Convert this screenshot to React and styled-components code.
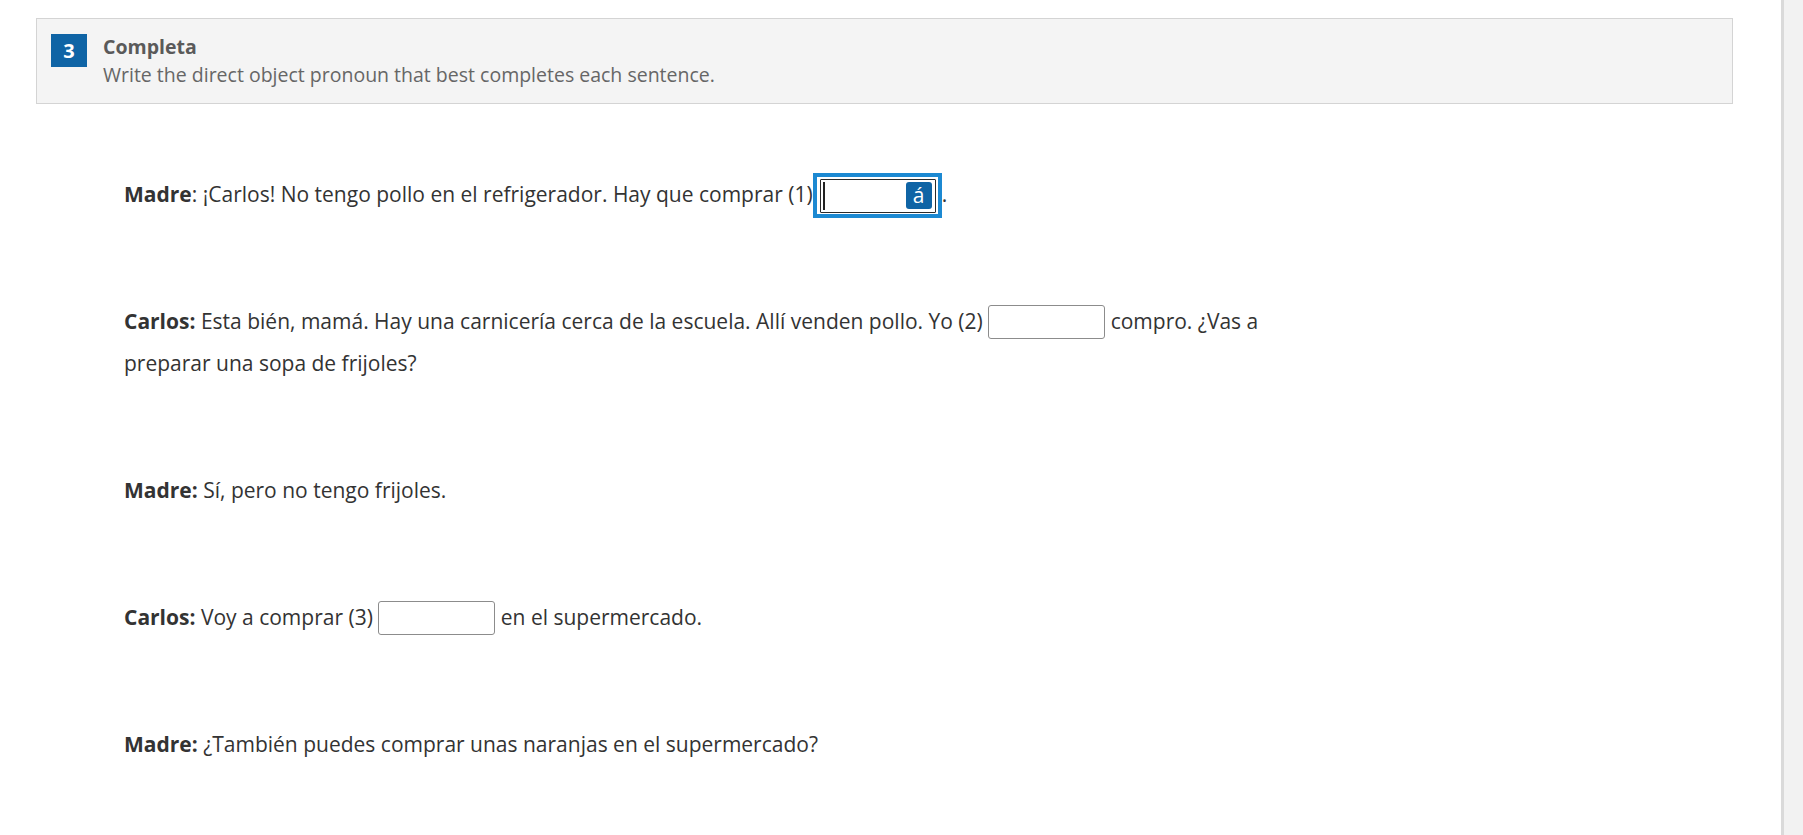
import styled, { createGlobalStyle } from "styled-components";

const GlobalStyle = createGlobalStyle`
    html, body {
        margin: 0;
        padding: 0;
        background: #fff;
    }
    body {
        font-family: "Open Sans", "Liberation Sans", sans-serif;
        color: #333;
        overflow: hidden;
    }
`;

const dialogue = [
    { who: "Madre", colonBold: false, parts: ["¡Carlos! No tengo pollo en el refrigerador. Hay que comprar (1)", { blank: 1, focused: true }, "."] },
    { who: "Carlos", colonBold: true, parts: ["Esta bién, mamá. Hay una carnicería cerca de la escuela. Allí venden pollo. Yo (2) ", { blank: 2 }, " compro. ¿Vas a preparar una sopa de frijoles?"] },
    { who: "Madre", colonBold: true, parts: ["Sí, pero no tengo frijoles."] },
    { who: "Carlos", colonBold: true, parts: ["Voy a comprar (3) ", { blank: 3 }, " en el supermercado."] },
    { who: "Madre", colonBold: true, parts: ["¿También puedes comprar unas naranjas en el supermercado?"] },
];

const Blank = ({ focused }) => {
    if (!focused) return <BlankInput type="text" />;
    return (
        <FocusRing>
            <BlankInput type="text" $focused />
            <Caret />
            <AccentButton type="button">á</AccentButton>
        </FocusRing>
    );
};

const App = () => {
    return (
        <Page>
            <GlobalStyle />
            <Main>
                <Instructions>
                    <Badge>3</Badge>
                    <InstructionsText>
                        <Title>Completa</Title>
                        <Subtitle>Write the direct object pronoun that best completes each sentence.</Subtitle>
                    </InstructionsText>
                </Instructions>

                <Dialogue>
                    {dialogue.map((line, i) => (
                        <Line key={i}>
                            <Speaker>{line.who}{line.colonBold && ":"}</Speaker>
                            {!line.colonBold && ":"}{" "}
                            {line.parts.map((part, j) =>
                                typeof part === "string"
                                    ? part
                                    : <Blank key={j} focused={part.focused} />
                            )}
                        </Line>
                    ))}
                </Dialogue>
            </Main>
            <ScrollTrack />
        </Page>
    );
};

export default App;

const Page = styled.div`
    display: flex;
    height: 100vh;
    width: 100%;
`;

const Main = styled.main`
    flex: 1;
    padding: 18px 48px 0 36px;
    min-width: 0;
`;

const Instructions = styled.section`
    display: flex;
    align-items: flex-start;
    gap: 16px;
    padding: 15px 14px 14px 14px;
    background-color: #f4f4f4;
    border: 1px solid #d4d4d4;
`;

const Badge = styled.div`
    width: 36px;
    height: 33px;
    display: flex;
    align-items: center;
    justify-content: center;
    background-color: #0f64a5;
    color: #fff;
    font-size: 20px;
    font-weight: 700;
`;

const InstructionsText = styled.div`
    display: flex;
    flex-direction: column;
    font-size: 19.5px;
    line-height: 28px;
`;

const Title = styled.div`
    font-weight: 700;
    color: #5a5a5a;
    margin-top: -1px;
`;

const Subtitle = styled.div`
    color: #666;
`;

const Dialogue = styled.div`
    display: flex;
    flex-direction: column;
    gap: 85px;
    margin-top: 69px;
    padding-left: 88px;
    width: 1180px;
`;

const Line = styled.p`
    margin: 0;
    font-size: 21px;
    line-height: 42px;
    color: #333;
`;

const Speaker = styled.b`
    font-weight: 700;
    color: #333;
`;

const BlankInput = styled.input`
    display: inline-block;
    vertical-align: middle;
    box-sizing: border-box;
    width: 117px;
    height: 34px;
    margin: -2px 0 0 0;
    padding: 0 6px;
    font-family: "Open Sans", "Liberation Sans", sans-serif;
    font-size: 20px;
    background: #fff;
    border: 1px solid ${({ $focused }) => ($focused ? "#2b2b2b" : "#8c8c8c")};
    border-radius: ${({ $focused }) => ($focused ? "1px" : "3px")};
    outline: none;
`;

const FocusRing = styled.span`
    position: relative;
    display: inline-block;
    vertical-align: middle;
    margin: -6px 0 -4px 0;
    padding: 2px 2px 1px 3px;
    border: 4px solid #1c89d2;
    line-height: 0;

    ${BlankInput} {
        margin: 0;
        width: 116px;
    }
`;

const Caret = styled.span`
    position: absolute;
    left: 6px;
    top: 5px;
    width: 2px;
    height: 28px;
    background: #222;
`;

const AccentButton = styled.button`
    position: absolute;
    top: 5px;
    right: 6px;
    width: 26px;
    height: 27px;
    padding: 0;
    border: none;
    border-radius: 3px;
    background-color: #0f64a5;
    color: #fff;
    font-family: "Open Sans", "Liberation Sans", sans-serif;
    font-size: 21px;
    line-height: 25px;
    text-align: center;
`;

const ScrollTrack = styled.div`
    flex: 0 0 19px;
    height: 100%;
    background-color: #f2f2f2;
    border-left: 3px solid #dadada;
`;
